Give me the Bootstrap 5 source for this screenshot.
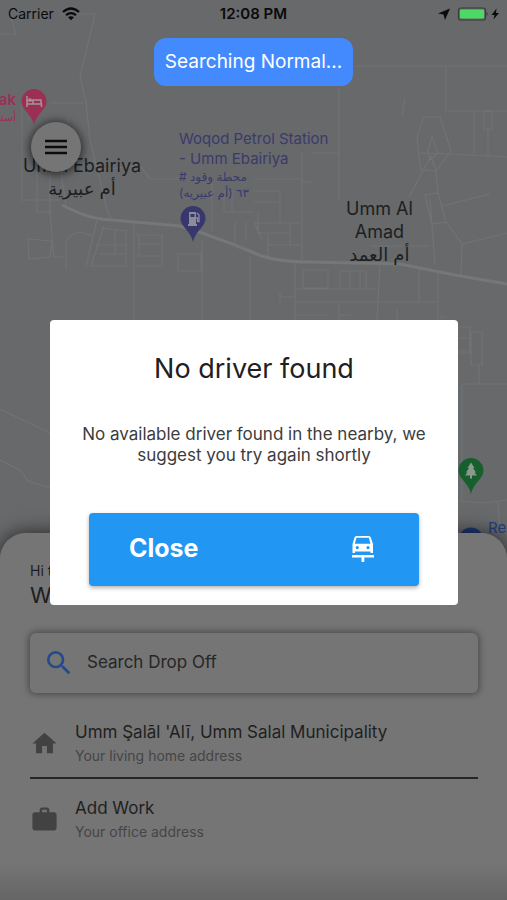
<!DOCTYPE html>
<html lang="en">
<head>
<meta charset="utf-8">
<meta name="viewport" content="width=device-width, initial-scale=1">
<title>No driver found</title>
<link href="https://cdn.jsdelivr.net/npm/bootstrap@5.3.0/dist/css/bootstrap.min.css" rel="stylesheet">
<style>
  body { font-family: Inter, "DejaVu Sans", sans-serif; background: #67696b; color: #1d1e1f; }
  .app-screen { isolation: isolate; }
  .map-canvas { z-index: -1; }
  .map-canvas svg.roads { width: 100%; height: 100%; }
  .roads path { fill: none; stroke: #717375; stroke-width: 1.2; }
  .roads path.major { stroke: #757779; stroke-width: 3; }
  .place { position: absolute; text-align: center; white-space: nowrap; font-size: 18px; line-height: 23px; }
  .place-start { text-align: left; font-size: 15px; line-height: 20px; color: #3b3a6c; }
  .place-hotel { color: #9c3053; text-align: right; font-size: 15px; font-weight: 600; line-height: 18px; }
  .place small { display: block; font-size: 12px; line-height: 16px; font-weight: 400; }
  .place-hotel small { font-size: 11px; }
  .pin { position: absolute; width: 26px; height: 38px; }
  .status-bar { height: 28px; font-size: 14px; line-height: 28px; color: #0b0b0c; }
  .status-clock { font-size: 15px; font-weight: 600; }
  .notice { background: #448aff; color: #fff; border-radius: 12px; font-size: 19px; line-height: 24px; margin-top: 10px; padding: 12px 11px; }
  .menu-btn { width: 50px; height: 50px; margin: 36px 0 0 31px; background: #757575; color: #0c0c0c; box-shadow: 0 1px 8px 2px rgba(0,0,0,.55); }
  .sheet { background: linear-gradient(#757575 calc(100% - 36px), #656565); border-radius: 26px 26px 0 0; box-shadow: 0 0 18px 2px rgba(0,0,0,.55); padding: 28px 29px 47px 30px; }
  .greet { font-size: 14px; line-height: 20px; }
  .headline { font-size: 22px; line-height: 28px; }
  .search-box { background: #757575; border-radius: 6px; height: 60px; padding: 0 17px; margin-top: 24px; box-shadow: 0 0 7px 1px rgba(0,0,0,.42); }
  .search-box input, .search-box input:focus { background: transparent; border: 0; box-shadow: none; color: #262626; font-size: 17px; padding: 0; }
  .search-box input::placeholder { color: #262626; opacity: 1; }
  .saved { color: #1f1f1f; padding: 26px 0 10px; border-bottom: 2px solid #252727; }
  .saved + .saved { border: 0; padding-top: 16px; }
  .saved-title { font-size: 17px; line-height: 26px; }
  .saved-sub { font-size: 14px; line-height: 22px; color: #454545; }
  .saved svg { color: #424242; }
  .overlay { padding: 24px 49px 0 50px; }
  .dialog { border-radius: 4px; color: #1f2021; padding: 29px 32px 19px; }
  .dialog h1 { font-size: 27px; line-height: 40px; font-weight: 400; margin-bottom: 35px; }
  .dialog p { font-size: 17px; line-height: 21px; color: #3b3c3d; margin-bottom: 47px; }
  .close-btn { background: #2196f3; color: #fff; border-radius: 4px; height: 73px; margin: 0 7px; padding: 0 40px; font-size: 25px; font-weight: 700; box-shadow: 0 2px 4px rgba(0,0,0,.3); }
  .close-btn:hover { background: #1e88e5; color: #fff; }
</style>
</head>
<body>
<div class="app-screen position-relative min-vh-100 d-flex flex-column overflow-hidden">

  <div class="map-canvas position-absolute top-0 start-0 w-100 h-100">
    <svg class="roads" viewBox="0 0 507 900" preserveAspectRatio="xMidYMid slice" aria-hidden="true">
      <path class="major" d="M62 205C78 213 90 219 112 220L180 226 205 234 235 245 254 253C270 260 290 262 310 262L400 264 455 275 507 284"/>
      <path d="M0 34H16L10 14M60 14H95L80 77 86 102 90 140 101 185 107 210 112 220M50 103H84M22 103V201M37 170V212H52M50 150V212L54 257M22 200H60M68 118V162M96 170L140 166 150 179H180M60 165L66 205"/>
      <path d="M28 239L52 241 50 257 29 259ZM54 257H63M66 270V242Q70 232 82 232L92 236M97 220L86 266M104 226L91 266M101 228L126 231V266H91M115 230V254M96 245H126M99 254H126M134 223V320M134 235H162V266H134M139 236V256H162M138 244H162"/>
      <path d="M178 254H201V271H178ZM202 240V320M212 180V232M235 222V244L254 251M246 222V240M224 190V212H254M232 190V212M250 256V320"/>
      <path d="M339 88V200M355 66H507M446 66V111H507M474 112V155M484 112H492V129H484ZM488 129V155M312 153H339M420 153L451 154 507 157M405 98L402 116"/>
      <path d="M424 117H440L451 151 436 171 421 170 418 150 417 136ZM432 137L438 153 430 160 428 150ZM431 156L409 197M431 156L436 171M436 171L438 194M425 195L438 193 446 222 432 224ZM442 206L490 194M446 222 462 244 461 275M462 244L507 233M430 200L435 265M370 246H430"/>
      <path d="M302 152V260M302 182H312M254 179H302M254 191H280V223M254 202H280M258 212V233M254 223H301M258 233H290M268 234V256M268 245H301M290 223V246M254 221L262 240"/>
      <path d="M295 263V320M303 270H328V288H303ZM340 271H366V289H340ZM350 271V288M360 271V288M295 289H377M279 297H295M295 302H438M339 302V320M295 315H328M339 315H352M380 264L377 320M419 268V302M438 272V320M397 309V320M280 292V303M438 317H446"/>
      <path d="M458 327H470V353H458M472 332H482V365H471V332M458 338H470M458 351H470M479 365V384M460 388 463 384H507M462 388V500M458 501L484 503 507 500M498 502 500 530M0 409L50 433M0 460L20 470 28 481 50 488"/>
    </svg>

    <div class="place place-hotel" style="right: calc(100% - 16px); top: 91px">ak<small lang="ar" dir="rtl" class="text-end">أستـ</small></div>
    <div class="place" style="left: 23px; top: 154px">Umm Ebairiya<div lang="ar">أم عبيرية</div></div>
    <div class="place place-start" style="left: 179px; top: 129px">Woqod Petrol Station<br>- Umm Ebairiya
      <small lang="ar" dir="rtl" class="text-start">محطة وقود #<br>٦٣ (أم عبيريه)</small></div>
    <div class="place" style="left: 346px; top: 197px">Umm Al<br>Amad<div lang="ar">أم العمد</div></div>
    <div class="place place-start" style="left: 488px; top: 518px; color: #233f7c">Re</div>

    <svg class="pin" style="left: 21px; top: 88px" viewBox="0 0 26 38" aria-hidden="true"><path fill="#9c3053" d="M13 1A12.500 12.500 0 0 0 .5 13.500C.5 22 11 26 13 37 15 26 25.500 22 25.500 13.500A12.500 12.500 0 0 0 13 1Z"/><path stroke="#a3949b" stroke-width="1.5" fill="none" d="M6 8V19M6 16H20.500V19M20 16V12H12V16M6 12.500H12"/><circle cx="9" cy="12" r="1.800" fill="#a3949b"/></svg>
    <svg class="pin" style="left: 180px; top: 205px" viewBox="0 0 26 38" aria-hidden="true"><path fill="#38376d" d="M13 1A12.500 12.500 0 0 0 .5 13.500C.5 22 11 26 13 37 15 26 25.500 22 25.500 13.500A12.500 12.500 0 0 0 13 1Z"/><path fill="#8c8d96" fill-rule="evenodd" d="M9 7H16V19H17V21H8V19H9ZM10.500 9V12H14.500V9Z"/><path stroke="#8c8d96" stroke-width="1.300" fill="none" d="M17 8L19 10V16.500H17.500V13H16"/></svg>
    <svg class="pin" style="left: 458px; top: 457px" viewBox="0 0 26 38" aria-hidden="true"><path fill="#17602d" d="M13 1A12.500 12.500 0 0 0 .5 13.500C.5 22 11 26 13 37 15 26 25.500 22 25.500 13.500A12.500 12.500 0 0 0 13 1Z"/><path fill="#8c9990" d="M13 5.500L16.500 11H15L18 15.500H16.500L19 18.500H14V21.500H12V18.500H7L9.500 15.500H8L11 11H9.500Z"/></svg>
    <svg class="pin" style="left: 458px; top: 527px" viewBox="0 0 26 38" aria-hidden="true"><circle cx="13" cy="13" r="12.500" fill="#1e3873"/></svg>
  </div>

  <header class="status-bar d-flex justify-content-between position-relative px-2">
    <div class="d-flex align-items-center gap-2"><span>Carrier</span>
      <svg width="18" height="14" viewBox="0 0 18 14" role="img" aria-label="Wi-Fi" fill="none" stroke="currentColor" stroke-width="2.300"><path d="M1 5Q9 -2 17 5M4 8.200Q9 4 14 8.200"/><path fill="currentColor" stroke="none" d="M6 10.300Q9 8 12 10.300L9 13.300Z"/></svg>
    </div>
    <span class="status-clock position-absolute start-50 translate-middle-x">12:08 PM</span>
    <div class="d-flex align-items-center">
      <svg width="62" height="16" viewBox="0 0 62 16" role="img" aria-label="Location on, battery charging"><path fill="currentColor" d="M13 2.500L1 7.500 6.500 8.500 8 14Z"/><rect x="21.500" y="2" width="27" height="12" rx="2.500" fill="none" stroke="#3a3b3c" stroke-width="1.200"/><rect x="23" y="3.500" width="24" height="9" rx="1" fill="#4cd964"/><path fill="#3a3b3c" d="M49.500 6Q52 8 49.500 10Z"/><path fill="currentColor" d="M59.500 2.500L54.500 9H57.500L56.500 13.500 62 7H59Z"/></svg>
    </div>
  </header>

  <div class="notice align-self-center" role="status">Searching Normal...</div>
  <button type="button" class="menu-btn btn rounded-circle border-0 p-0 d-flex align-items-center justify-content-center" aria-label="Menu">
    <svg width="24" height="18" viewBox="0 0 24 18" aria-hidden="true"><path stroke="currentColor" stroke-width="2.500" d="M1 3H23M1 9H23M1 15H23"/></svg>
  </button>

  <main class="sheet mt-auto">
    <div class="greet">Hi there,</div>
    <div class="headline">Where to?</div>
    <div class="search-box d-flex align-items-center gap-3">
      <svg class="flex-shrink-0" width="24" height="24" viewBox="3 3 18 18" aria-hidden="true"><path fill="#234a8c" d="M15.500 14h-.79l-.28-.27A6.470 6.470 0 0 0 16 9.500 6.500 6.500 0 1 0 9.500 16c1.610 0 3.090-.59 4.230-1.570l.27.28v.79l5 4.990L20.490 19zm-6 0C7.010 14 5 11.990 5 9.500S7.010 5 9.500 5 14 7.010 14 9.500 11.990 14 9.500 14z"/></svg>
      <input type="text" class="form-control" placeholder="Search Drop Off" aria-label="Search Drop Off">
    </div>
    <a href="#home" class="saved d-flex align-items-center gap-3 text-decoration-none">
      <svg width="29" height="29" viewBox="0 0 24 24" fill="currentColor" aria-hidden="true"><path d="M10 20v-6h4v6h5v-8h3L12 3 2 12h3v8z"/></svg>
      <div><div class="saved-title">Umm Şalāl 'Alī, Umm Salal Municipality</div><div class="saved-sub">Your living home address</div></div>
    </a>
    <a href="#work" class="saved d-flex align-items-center gap-3 text-decoration-none">
      <svg width="29" height="29" viewBox="0 0 24 24" fill="currentColor" aria-hidden="true"><path d="M20 6h-4V4c0-1.110-.89-2-2-2h-4c-1.110 0-2 .89-2 2v2H4c-1.110 0-2 .89-2 2v11c0 1.110.89 2 2 2h16c1.110 0 2-.89 2-2V8c0-1.110-.89-2-2-2zm-6 0h-4V4h4v2z"/></svg>
      <div><div class="saved-title">Add Work</div><div class="saved-sub">Your office address</div></div>
    </a>
  </main>

  <div class="overlay position-absolute top-0 start-0 w-100 h-100 d-flex align-items-center pe-none">
    <div class="dialog bg-white w-100 text-center pe-auto" role="dialog" aria-labelledby="dialogTitle">
      <h1 id="dialogTitle">No driver found</h1>
      <p>No available driver found in the nearby, we suggest you try again shortly</p>
      <div class="d-flex">
        <button type="button" class="close-btn btn border-0 flex-grow-1 d-flex align-items-center justify-content-between">
          <span>Close</span>
          <svg class="me-1" width="24" height="28" viewBox="0 0 24 28" aria-hidden="true"><path fill="currentColor" fill-rule="evenodd" d="M5 1H18Q19.300 1 19.800 2.500L22 9V18H19.500V16.500H4V18H1.500V9L3.500 2.500Q4 1 5 1ZM5.500 2.800L3.800 8.800H19.500L17.800 2.800ZM6.300 11A1.600 1.600 0 1 0 6.300 14.200 1.600 1.600 0 0 0 6.300 11ZM17 11A1.600 1.600 0 1 0 17 14.200 1.600 1.600 0 0 0 17 11ZM1 20H23V22.500H13.300V27H10.500V22.500H1Z"/></svg>
        </button>
      </div>
    </div>
  </div>
</div>
<script src="https://cdn.jsdelivr.net/npm/bootstrap@5.3.0/dist/js/bootstrap.bundle.min.js"></script>
</body>
</html>
